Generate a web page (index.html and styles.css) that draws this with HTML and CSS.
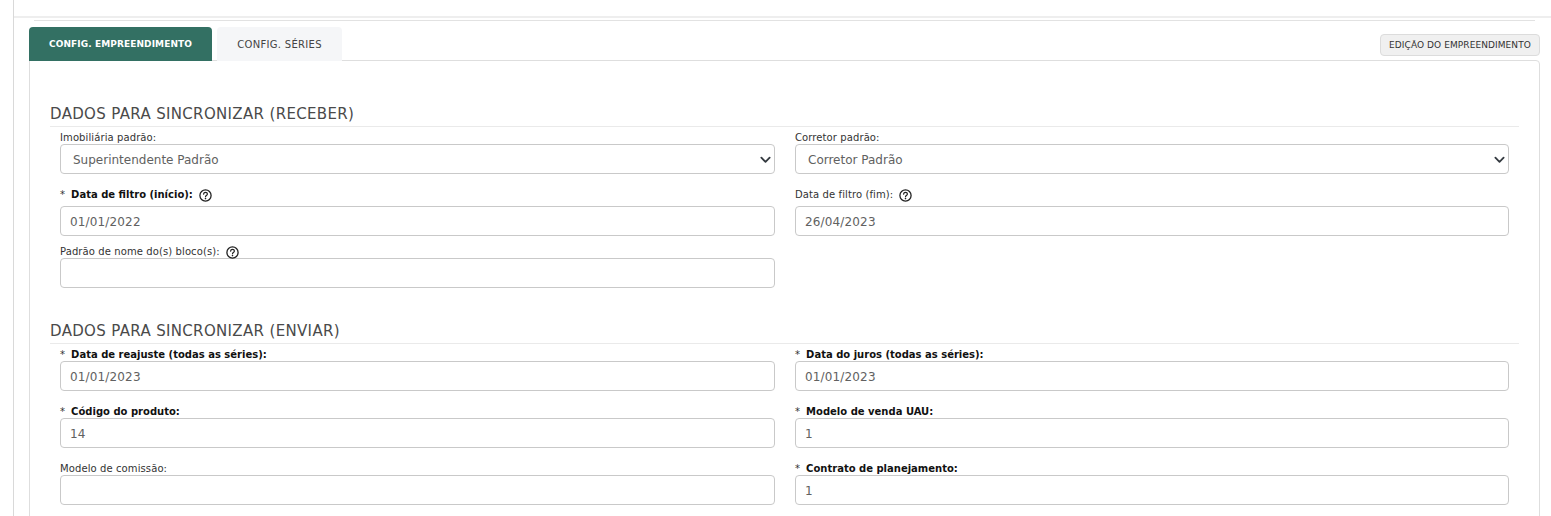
FILE: index.html
```html
<!DOCTYPE html>
<html lang="pt-BR">
<head>
<meta charset="utf-8">
<title>Config. Empreendimento</title>
<link rel="stylesheet" href="styles.css">
</head>
<body>
<svg class="defs" width="0" height="0" aria-hidden="true">
  <symbol id="help" viewBox="0 0 13 13">
    <circle cx="6.5" cy="6.5" r="5.6" fill="none" stroke="#222" stroke-width="1.3"/>
    <path d="M4.6 5.1c.1-1.1.9-1.7 1.9-1.7s1.9.6 1.9 1.6c0 1.5-1.9 1.4-1.9 2.7" fill="none" stroke="#222" stroke-width="1.2" stroke-linecap="round"/>
    <circle cx="6.5" cy="9.6" r=".8" fill="#222"/>
  </symbol>
  <symbol id="chev" viewBox="0 0 12 8">
    <path d="M1.5 1.5 6 6l4.5-4.5" fill="none" stroke="#343a40" stroke-width="2" stroke-linecap="round" stroke-linejoin="round"/>
  </symbol>
</svg>
<div class="shell">
  <div class="topbar"></div>
  <div class="content">
    <div class="subline"></div>
    <div class="tabbar">
      <div class="tabs">
        <a class="tab tab-active">CONFIG. EMPREENDIMENTO</a>
        <a class="tab">CONFIG. SÉRIES</a>
      </div>
      <button class="edit-btn">EDIÇÃO DO EMPREENDIMENTO</button>
    </div>
    <div class="panel">
      <h2 class="section-title">DADOS PARA SINCRONIZAR (RECEBER)</h2>
      <div class="grid">
        <div class="field">
          <label class="label">Imobiliária padrão:</label>
          <div class="select-wrap">
            <div class="control select">Superintendente Padrão</div>
            <svg class="chevron"><use href="#chev"/></svg>
          </div>
        </div>
        <div class="field">
          <label class="label">Corretor padrão:</label>
          <div class="select-wrap">
            <div class="control select">Corretor Padrão</div>
            <svg class="chevron"><use href="#chev"/></svg>
          </div>
        </div>
        <div class="field field-gap">
          <label class="label"><span class="req">*</span><b>Data de filtro (início):</b><svg class="help"><use href="#help"/></svg></label>
          <div class="control">01/01/2022</div>
        </div>
        <div class="field field-gap">
          <label class="label">Data de filtro (fim):<svg class="help"><use href="#help"/></svg></label>
          <div class="control">26/04/2023</div>
        </div>
        <div class="field field-near">
          <label class="label">Padrão de nome do(s) bloco(s):<svg class="help"><use href="#help"/></svg></label>
          <div class="control"></div>
        </div>
      </div>
      <h2 class="section-title section-second">DADOS PARA SINCRONIZAR (ENVIAR)</h2>
      <div class="grid">
        <div class="field">
          <label class="label"><span class="req">*</span><b>Data de reajuste (todas as séries):</b></label>
          <div class="control">01/01/2023</div>
        </div>
        <div class="field">
          <label class="label"><span class="req">*</span><b>Data do juros (todas as séries):</b></label>
          <div class="control">01/01/2023</div>
        </div>
        <div class="field field-gap-s">
          <label class="label"><span class="req">*</span><b>Código do produto:</b></label>
          <div class="control">14</div>
        </div>
        <div class="field field-gap-s">
          <label class="label"><span class="req">*</span><b>Modelo de venda UAU:</b></label>
          <div class="control">1</div>
        </div>
        <div class="field field-gap-s">
          <label class="label">Modelo de comissão:</label>
          <div class="control"></div>
        </div>
        <div class="field field-gap-s">
          <label class="label"><span class="req">*</span><b>Contrato de planejamento:</b></label>
          <div class="control">1</div>
        </div>
      </div>
    </div>
  </div>
</div>
</body>
</html>
```
FILE: styles.css
```css
* { box-sizing: border-box; }
html, body { margin: 0; height: 516px; overflow: hidden; background: #fff; }
body { font-family: "DejaVu Sans", Verdana, sans-serif; color: #212529; }
.defs { display: block; height: 0; }

.shell { margin-left: 13px; height: 516px; border-left: 1px solid #d9d9d9; overflow: hidden; }
.topbar { height: 18px; border-bottom: 2px solid #eeeeee; }
.content { padding: 0 11px 0 15px; }
.subline { height: 1px; margin: 2px 5px 0 5px; background: #e2e2e2; }

.tabbar { display: flex; justify-content: space-between; align-items: flex-start; height: 40px; padding-top: 6px; margin-bottom: -1px; }
.tabs { display: flex; gap: 5px; }
.tab { display: flex; align-items: center; justify-content: center; height: 34px; border-radius: 4px 4px 0 0; font-size: 10px; letter-spacing: .3px; background: #f5f6f8; color: #444; width: 125px; }
.tab-active { width: 183px; background: #337063; color: #fff; font-weight: 700; position: relative; z-index: 1; font-size: 9px; letter-spacing: .1px; }
.edit-btn { margin-top: 7px; width: 160px; height: 22px; padding: 0; border: 1px solid #dcdcdc; border-radius: 4px; background: #f0f0f0; color: #333; font: 9px "DejaVu Sans", Verdana, sans-serif; letter-spacing: .08px; }

.panel { height: 470px; padding: 43px 20px 0 20px; border: 1px solid #dedede; border-radius: 0 4px 0 0; }
.section-title { margin: 0; height: 23px; font-size: 15px; letter-spacing: .34px; line-height: 20px; font-weight: 400; color: #4a4a4a; border-bottom: 1px solid #eaeaea; }
.section-second { margin-top: 32px; height: 24px; padding-top: 1px; }

.grid { display: grid; grid-template-columns: 715px 714px; column-gap: 20px; padding: 0 10px; }
.field { display: flex; flex-direction: column; min-width: 0; padding-top: 5px; }
.label { display: flex; align-items: center; height: 12px; font-size: 10px; letter-spacing: .1px; line-height: 12px; color: #333; white-space: pre; }
.label b { color: #111; letter-spacing: 0; }
.req { margin-right: 6px; }
.field-gap { padding-top: 15px; }
.field-gap .label { margin-bottom: 5px; }
.field-near { padding-top: 10px; }
.field-gap-s { padding-top: 15px; }

.help { flex: none; width: 13px; height: 13px; margin-left: 6px; position: relative; z-index: 1; }

.control { height: 30px; padding: 0 9px; border: 1px solid #c9c9c9; border-radius: 4px; font-size: 12px; letter-spacing: .15px; line-height: 30px; color: #616161; background: #fff; }
.select { padding-left: 12px; letter-spacing: 0; }
.select-wrap { position: relative; }
.chevron { position: absolute; right: 4px; top: 12px; width: 11px; height: 8px; }
```
